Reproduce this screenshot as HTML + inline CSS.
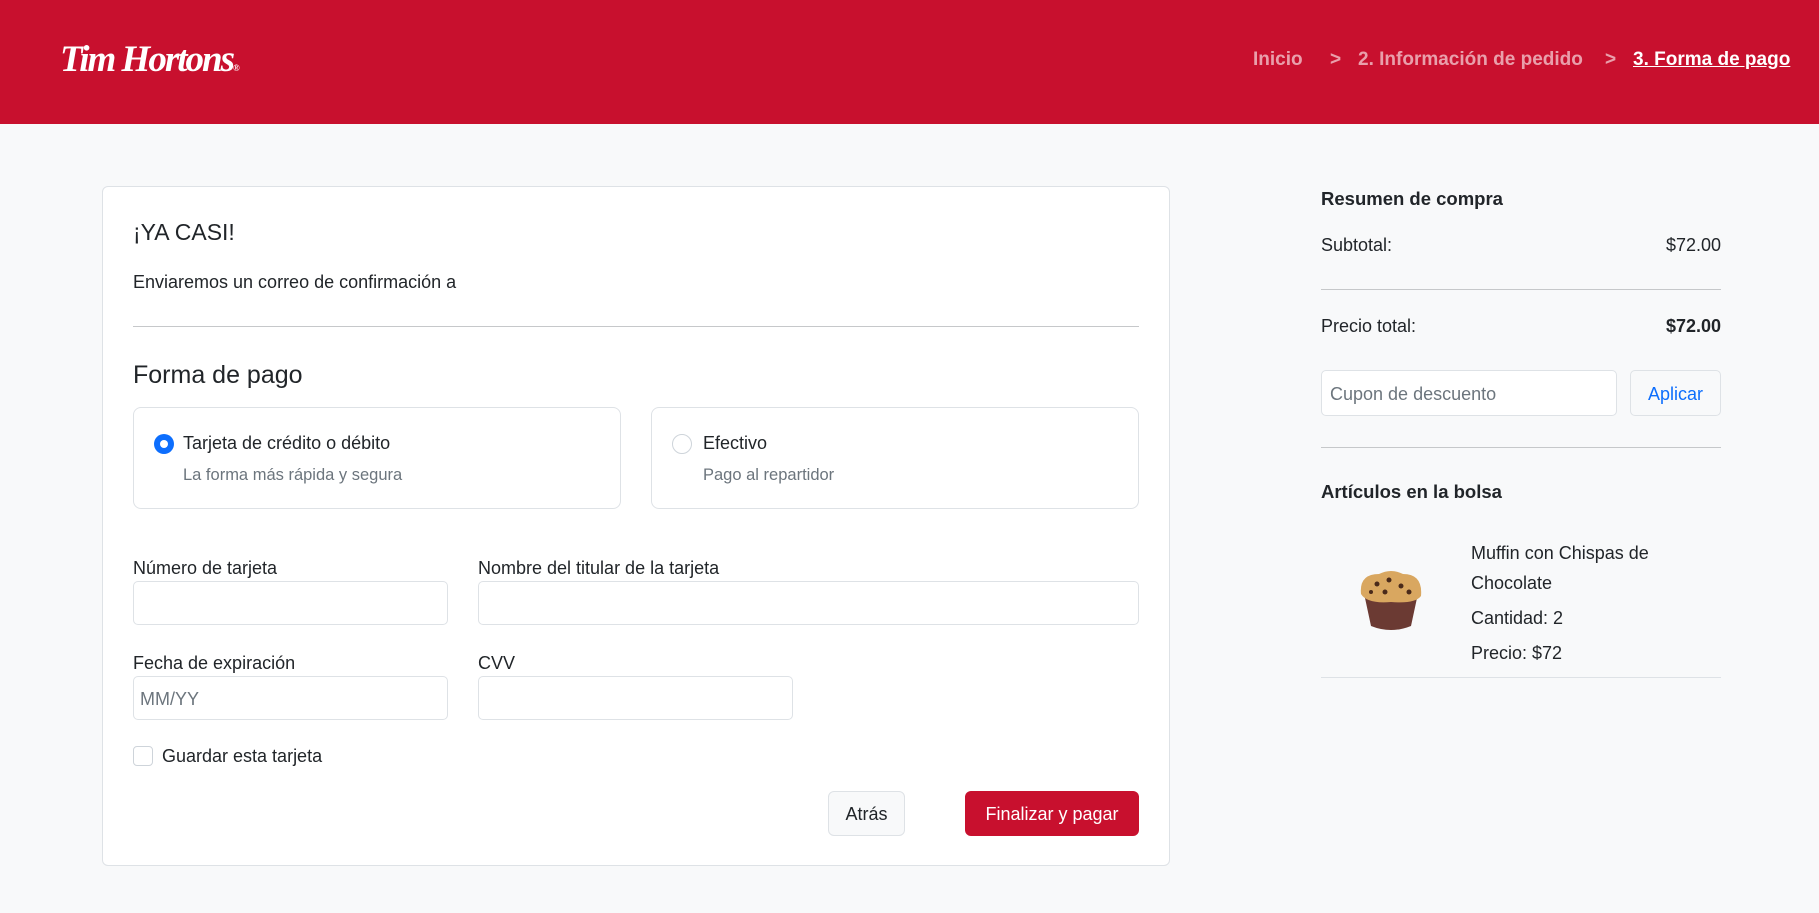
<!DOCTYPE html>
<html><head><meta charset="utf-8"><style>
*{box-sizing:border-box;margin:0;padding:0}
body{width:1819px;height:913px;background:#f8f9fa;font-family:"Liberation Sans",sans-serif;color:#212529;position:relative;overflow:hidden}
.a{position:absolute;white-space:nowrap}
header{position:absolute;left:0;top:0;width:1819px;height:124px;background:#c8102e}
.logo{left:60px;top:38px;font-family:"Liberation Serif",serif;font-style:italic;font-weight:bold;font-size:37px;color:#fff;letter-spacing:-2px}
.nav{top:49px;font-size:19px;font-weight:bold;color:rgba(255,255,255,.6)}
.card{position:absolute;left:102px;top:186px;width:1068px;height:680px;background:#fff;border:1px solid #dee2e6;border-radius:6px}
.hr{position:absolute;height:1px;background:#c6c8ca}
.box{position:absolute;border:1px solid #dee2e6;border-radius:8px;background:#fff}
.inp{position:absolute;border:1px solid #dee2e6;border-radius:5px;background:#fff;height:44px}
.t18{font-size:18px}
.lbl{font-size:18px}
.sub{font-size:16.5px;color:#6c757d}
.ph{color:#6c757d;font-size:18px}
</style></head><body>
<header></header>
<div class="a logo">Tim Hortons<span style="font-size:9px;letter-spacing:0">®</span></div>
<div class="a nav" style="left:1253px">Inicio</div>
<div class="a nav" style="left:1330px">&gt;</div>
<div class="a nav" style="left:1358px">2. Información de pedido</div>
<div class="a nav" style="left:1605px">&gt;</div>
<div class="a nav" style="left:1633px;color:#fff;text-decoration:underline">3. Forma de pago</div>

<div class="card"></div>
<div class="a" style="left:133px;top:219px;font-size:23px;font-weight:500">¡YA CASI!</div>
<div class="a t18" style="left:133px;top:272px">Enviaremos un correo de confirmación a</div>
<div class="hr" style="left:133px;top:326px;width:1006px"></div>
<div class="a" style="left:133px;top:361px;font-size:25px">Forma de pago</div>

<div class="box" style="left:133px;top:407px;width:488px;height:102px"></div>
<div class="box" style="left:651px;top:407px;width:488px;height:102px"></div>
<div class="a" style="left:154px;top:434px;width:20px;height:20px;border-radius:50%;background:#0d6efd"><div style="position:absolute;left:6px;top:6px;width:8px;height:8px;border-radius:50%;background:#fff"></div></div>
<div class="a t18" style="left:183px;top:433px">Tarjeta de crédito o débito</div>
<div class="a sub" style="left:183px;top:466px">La forma más rápida y segura</div>
<div class="a" style="left:672px;top:434px;width:20px;height:20px;border-radius:50%;border:1px solid #ced4da;background:#fff"></div>
<div class="a t18" style="left:703px;top:433px">Efectivo</div>
<div class="a sub" style="left:703px;top:466px">Pago al repartidor</div>

<div class="a lbl" style="left:133px;top:558px">Número de tarjeta</div>
<div class="inp" style="left:133px;top:581px;width:315px"></div>
<div class="a lbl" style="left:478px;top:558px">Nombre del titular de la tarjeta</div>
<div class="inp" style="left:478px;top:581px;width:661px"></div>
<div class="a lbl" style="left:133px;top:653px">Fecha de expiración</div>
<div class="inp" style="left:133px;top:676px;width:315px"></div>
<div class="a ph" style="left:140px;top:689px">MM/YY</div>
<div class="a lbl" style="left:478px;top:653px">CVV</div>
<div class="inp" style="left:478px;top:676px;width:315px"></div>
<div class="a" style="left:133px;top:746px;width:20px;height:20px;border:1px solid #ced4da;border-radius:4px;background:#fff"></div>
<div class="a t18" style="left:162px;top:746px">Guardar esta tarjeta</div>

<div class="a" style="left:828px;top:791px;width:77px;height:45px;border:1px solid #dee2e6;border-radius:6px;background:#f8f9fa;font-size:18px;text-align:center;line-height:45px">Atrás</div>
<div class="a" style="left:965px;top:791px;width:174px;height:45px;border-radius:6px;background:#c8102e;color:#fff;font-size:18px;text-align:center;line-height:47px">Finalizar y pagar</div>

<div class="a" style="left:1321px;top:188px;font-size:18.5px;font-weight:bold;color:#212529">Resumen de compra</div>
<div class="a t18" style="left:1321px;top:235px">Subtotal:</div>
<div class="a t18" style="left:1621px;top:235px;width:100px;text-align:right">$72.00</div>
<div class="hr" style="left:1321px;top:289px;width:400px"></div>
<div class="a t18" style="left:1321px;top:316px">Precio total:</div>
<div class="a t18" style="left:1621px;top:316px;width:100px;text-align:right;font-weight:bold">$72.00</div>
<div class="inp" style="left:1321px;top:370px;width:296px;height:46px"></div>
<div class="a ph" style="left:1330px;top:384px">Cupon de descuento</div>
<div class="a" style="left:1630px;top:370px;width:91px;height:46px;border:1px solid #dee2e6;border-radius:5px;color:#0d6efd;font-size:18px;text-align:center;line-height:46px">Aplicar</div>
<div class="hr" style="left:1321px;top:447px;width:400px"></div>
<div class="a" style="left:1321px;top:481px;font-size:18.5px;font-weight:bold">Artículos en la bolsa</div>
<svg class="a" style="left:1355px;top:568px" width="72" height="66" viewBox="0 0 72 66">
<path d="M10 30 L62 30 L56 58 Q36 66 16 58 Z" fill="#6b3a33"/>
<path d="M6 26 Q4 6 24 6 Q36 0 48 6 Q68 6 66 28 Q60 36 36 34 Q12 36 6 26Z" fill="#d9a760"/>
<circle cx="22" cy="16" r="2.5" fill="#4a2a1a"/><circle cx="34" cy="12" r="2.5" fill="#4a2a1a"/><circle cx="46" cy="18" r="2.5" fill="#4a2a1a"/><circle cx="30" cy="24" r="2.5" fill="#4a2a1a"/><circle cx="54" cy="24" r="2.5" fill="#4a2a1a"/><circle cx="16" cy="24" r="2" fill="#4a2a1a"/>
</svg>
<div class="a t18" style="left:1471px;top:543px">Muffin con Chispas de</div>
<div class="a t18" style="left:1471px;top:573px">Chocolate</div>
<div class="a t18" style="left:1471px;top:608px">Cantidad: 2</div>
<div class="a t18" style="left:1471px;top:643px">Precio: $72</div>
<div class="hr" style="left:1321px;top:677px;width:400px;background:#dee2e6"></div>
</body></html>
